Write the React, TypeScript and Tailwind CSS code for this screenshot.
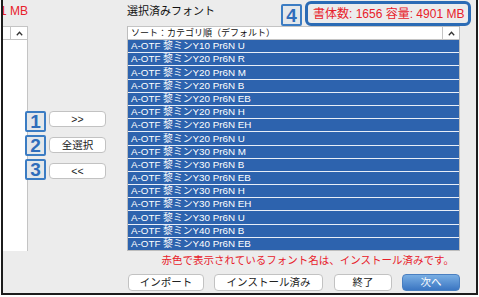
import React from "react";

const FONT = { fontFamily: '"Liberation Sans", "Noto Sans CJK JP", sans-serif' };

const rows = [
  "Y10 Pr6N U",
  "Y20 Pr6N R",
  "Y20 Pr6N M",
  "Y20 Pr6N B",
  "Y20 Pr6N EB",
  "Y20 Pr6N H",
  "Y20 Pr6N EH",
  "Y20 Pr6N U",
  "Y30 Pr6N M",
  "Y30 Pr6N B",
  "Y30 Pr6N EB",
  "Y30 Pr6N H",
  "Y30 Pr6N EH",
  "Y30 Pr6N U",
  "Y40 Pr6N B",
  "Y40 Pr6N EB",
];

function Chevron() {
  return (
    <svg width="7" height="5" viewBox="0 0 7 5" className="block">
      <path d="M0.8 4.2 L3.5 1.3 L6.2 4.2" fill="none" stroke="#333" strokeWidth="1.3" />
    </svg>
  );
}

function NumBox({ n, className }: { n: string; className: string }) {
  return (
    <div
      className={
        "absolute w-[21px] h-[21px] rounded-[2px] border-2 border-[#3b7cc3] bg-[#e4e7ea] flex items-center justify-center text-[#2f6dbb] text-[19px] font-bold leading-none " +
        className
      }
      style={{ fontFamily: '"Liberation Sans", sans-serif' }}
    >
      {n}
    </div>
  );
}

export default function App() {
  return (
    <div className="w-[479px] h-[297px] bg-white" style={FONT}>
      <div className="relative ml-[1px] w-[477px] h-[295px] border-l-2 border-r-2 border-b-2 border-[#1c1c1c] bg-[#ececec] overflow-hidden flex flex-col">
        {/* top bar */}
        <div className="h-[26px] flex shrink-0">
          <div className="w-[124px] pt-[4px] text-[12px] leading-[14px] text-[#e8202a] whitespace-nowrap">
            <span className="ml-[-3px]">1 MB</span>
          </div>
          <div className="pt-[4px] text-[11px] leading-[14px] text-[#111]">選択済みフォント</div>
        </div>

        {/* main area */}
        <div className="h-[225px] flex shrink-0">
          {/* left list */}
          <div className="w-[25px] bg-white border-r border-[#c4c4c4] flex flex-col">
            <div className="h-[14px] border-t border-b border-[#c4c4c4] flex">
              <div className="w-[8px] border-r border-[#c4c4c4]" />
              <div className="flex-1 flex items-center justify-center">
                <Chevron />
              </div>
            </div>
          </div>

          {/* middle buttons */}
          <div className="w-[99px] flex flex-col pt-[85px] pl-[21px] gap-[10px]">
            {[">>", "全選択", "<<"].map((t) => (
              <div
                key={t}
                className="w-[57px] h-[16px] rounded-[4px] bg-white border border-[#c2c2c2] flex items-center justify-center text-[10.5px] text-[#222] leading-none"
              >
                {t}
              </div>
            ))}
          </div>

          {/* right list */}
          <div className="w-[333px] flex flex-col border-l border-r border-b border-[#bdbdbd] bg-white">
            <div className="h-[14px] shrink-0 border-t border-b border-[#c4c4c4] flex bg-white">
              <div className="flex-1 border-r border-[#c4c4c4] pl-[3px] text-[9px] leading-[12px] text-[#111] whitespace-nowrap">
                ソート：カテゴリ順（デフォルト）
              </div>
              <div className="w-[16px] flex items-center justify-center">
                <Chevron />
              </div>
            </div>
            <div className="flex-1 flex flex-col">
              {rows.map((r, i) => (
                <div
                  key={i}
                  className={
                    "flex-1 bg-[#2d63ae] text-white text-[9.8px] pl-[3px] flex items-center whitespace-nowrap leading-none " +
                    (i > 0 ? "border-t border-[#e8eef8]" : "")
                  }
                >
                  A-OTF 黎ミン{r}
                </div>
              ))}
            </div>
          </div>
        </div>

        {/* note */}
        <div className="h-[23px] shrink-0 flex justify-end pr-[22px] pt-[3px]">
          <div className="text-[10.5px] leading-[13px] text-[#e8202a] whitespace-nowrap">
            赤色で表示されているフォント名は、インストール済みです。
          </div>
        </div>

        {/* bottom buttons */}
        <div className="h-[17px] shrink-0 flex ml-[125px] gap-[10px]">
          <div className="w-[76px] h-[17px] rounded-[4px] bg-white border border-[#c2c2c2] flex items-center justify-center text-[10.5px] text-[#222] leading-none">
            インポート
          </div>
          <div className="w-[109px] h-[17px] rounded-[4px] bg-white border border-[#c2c2c2] flex items-center justify-center text-[10.5px] text-[#222] leading-none">
            インストール済み
          </div>
          <div className="ml-[1px] w-[58px] h-[17px] rounded-[4px] bg-white border border-[#c2c2c2] flex items-center justify-center text-[10.5px] text-[#222] leading-none">
            終了
          </div>
          <div className="w-[58px] h-[17px] rounded-[4px] bg-gradient-to-b from-[#79aee3] to-[#3b76c2] border border-[#4a7fc0] flex items-center justify-center text-[10.5px] text-white leading-none">
            次へ
          </div>
        </div>

        {/* annotations */}
        <NumBox n="1" className="left-[22px] top-[111px]" />
        <NumBox n="2" className="left-[22px] top-[135px]" />
        <NumBox n="3" className="left-[22px] top-[159px]" />
        <NumBox n="4" className="left-[278px] top-[4px] h-[22px]" />
        <div className="absolute left-[302px] top-[1px] w-[166px] h-[25px] rounded-[6px] border-[3px] border-[#2b6bb5] bg-[#ececec] flex items-center pl-[5px] text-[12px] text-[#e8202a] whitespace-nowrap leading-none">
          書体数: 1656 容量: 4901 MB
        </div>
      </div>
    </div>
  );
}
